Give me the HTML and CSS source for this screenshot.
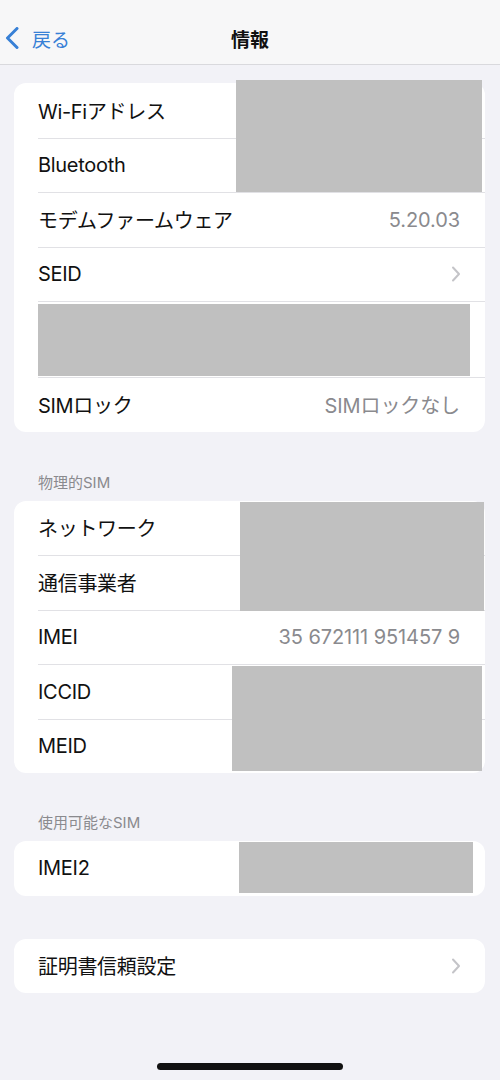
FILE: index.html
```html
<!DOCTYPE html>
<html lang="ja">
<head>
<meta charset="utf-8">
<title>情報</title>
<link rel="stylesheet" href="styles.css">
</head>
<body>
<header class="nav">
  <a class="back">
    <svg class="back-chev" width="14" height="22" viewBox="0 0 14 22"><path d="M12 1.5 L2.5 11 L12 20.5" fill="none" stroke="currentColor" stroke-width="3" stroke-linecap="round" stroke-linejoin="round"/></svg>
    <span>戻る</span>
  </a>
  <h1 class="title">情報</h1>
</header>

<main class="content">
  <section class="card first">
    <div class="row"><div class="inner"><span class="label">Wi-Fiアドレス</span></div></div>
    <div class="row"><div class="inner"><span class="label">Bluetooth</span></div></div>
    <div class="row"><div class="inner"><span class="label">モデムファームウェア</span><span class="value">5.20.03</span></div></div>
    <div class="row"><div class="inner"><span class="label">SEID</span><svg class="chev" width="10" height="16" viewBox="0 0 10 16"><path d="M2 1.5 L8 8 L2 14.5" fill="none" stroke="currentColor" stroke-width="2" stroke-linecap="round" stroke-linejoin="round"/></svg></div></div>
    <div class="row tall"><div class="inner"><div class="redact wide"></div></div></div>
    <div class="row"><div class="inner"><span class="label">SIMロック</span><span class="value">SIMロックなし</span></div></div>
    <div class="redact r1"></div>
  </section>

  <h2 class="section-head">物理的SIM</h2>
  <section class="card">
    <div class="row"><div class="inner"><span class="label">ネットワーク</span></div></div>
    <div class="row"><div class="inner"><span class="label">通信事業者</span></div></div>
    <div class="row"><div class="inner"><span class="label">IMEI</span><span class="value">35 672111 951457 9</span></div></div>
    <div class="row"><div class="inner"><span class="label">ICCID</span></div></div>
    <div class="row"><div class="inner"><span class="label">MEID</span></div></div>
    <div class="redact r3"></div>
    <div class="redact r4"></div>
  </section>

  <h2 class="section-head second">使用可能なSIM</h2>
  <section class="card">
    <div class="row"><div class="inner"><span class="label">IMEI2</span></div></div>
    <div class="redact r5"></div>
  </section>

  <section class="card last">
    <div class="row"><div class="inner"><span class="label">証明書信頼設定</span><svg class="chev" width="10" height="16" viewBox="0 0 10 16"><path d="M2 1.5 L8 8 L2 14.5" fill="none" stroke="currentColor" stroke-width="2" stroke-linecap="round" stroke-linejoin="round"/></svg></div></div>
  </section>
</main>

<div class="home-indicator"></div>
</body>
</html>
```

FILE: styles.css
```css
* { box-sizing: border-box; }

html, body {
  margin: 0;
  padding: 0;
}

body {
  width: 500px;
  height: 1080px;
  background: #f2f2f7;
  font-family: "Inter", "Noto Sans CJK JP", sans-serif;
  color: #111111;
  position: relative;
  overflow: hidden;
}

.nav {
  height: 65px;
  padding-top: 16px;
  background: #f7f7f8;
  border-bottom: 1px solid #d9d9dd;
  position: relative;
  display: flex;
  align-items: flex-start;
}

.back {
  display: flex;
  align-items: center;
  height: 44px;
  padding-left: 5px;
  color: #3880d6;
  font-size: 19px;
  gap: 13px;
}

.back-chev { display: block; }

.title {
  position: absolute;
  left: 0;
  right: 0;
  top: 16px;
  height: 44px;
  margin: 0;
  display: flex;
  align-items: center;
  justify-content: center;
  font-size: 19px;
  font-weight: 600;
  pointer-events: none;
}

.content {
  padding: 0 15px 0 14px;
}

.card {
  position: relative;
  background: #ffffff;
  border-radius: 12px;
}

.card.first { margin-top: 18px; }
.card.last { margin-top: 43px; }

.row {
  padding-left: 24px;
}

.inner {
  height: 54.5px;
  display: flex;
  align-items: center;
  justify-content: space-between;
  padding-right: 25px;
}

.row + .row .inner {
  border-top: 1px solid #e1e1e5;
}

.row.tall .inner {
  height: 76px;
  align-items: flex-start;
  padding-top: 2px;
}

.label {
  font-size: 20px;
  letter-spacing: -0.3px;
}

.value {
  font-size: 20px;
  color: #8a8a8e;
  letter-spacing: -0.1px;
}

.chev {
  color: #c4c4c8;
  display: block;
  margin-right: -1px;
}

.section-head {
  margin: 41px 0 8px 24px;
  height: 20px;
  line-height: 20px;
  font-size: 15px;
  font-weight: 400;
  color: #8a8a8e;
}

.section-head.second { margin-top: 40px; }

.redact {
  background: #c0c0c0;
}

.redact.wide {
  flex: 0 0 auto;
  width: 432px;
  height: 72px;
}

.r1 { position: absolute; left: 222px; top: -3px; width: 246px; height: 112px; }
.r3 { position: absolute; left: 226px; top: 1px; width: 244px; height: 109px; }
.r4 { position: absolute; left: 218px; top: 165px; width: 250px; height: 105px; }
.r5 { position: absolute; left: 225px; top: 1px; width: 234px; height: 51px; }

.home-indicator {
  position: absolute;
  left: 157px;
  top: 1063px;
  width: 186px;
  height: 7px;
  border-radius: 4px;
  background: #111111;
}
```
